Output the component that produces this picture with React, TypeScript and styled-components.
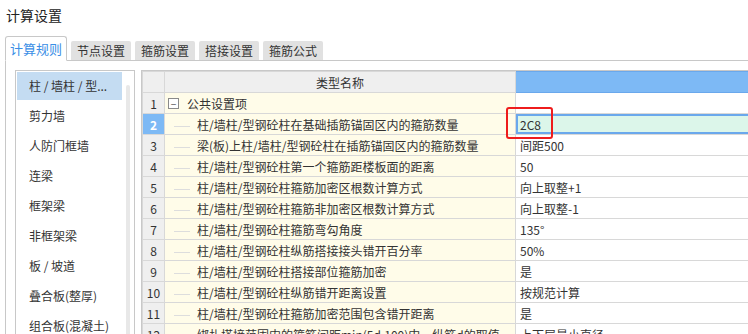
import styled, { createGlobalStyle, css } from "styled-components";

const GlobalStyle = createGlobalStyle`
  body {
    margin: 0;
    background: #ffffff;
    font-family: "Noto Sans CJK SC", "Noto Sans", sans-serif;
    font-size: 12px;
    color: #333333;
    overflow: hidden;
  }
`;

const tabs = ["计算规则", "节点设置", "箍筋设置", "搭接设置", "箍筋公式"];

const categories = [
  "柱 / 墙柱 / 型...",
  "剪力墙",
  "人防门框墙",
  "连梁",
  "框架梁",
  "非框架梁",
  "板 / 坡道",
  "叠合板(整厚)",
  "组合板(混凝土)",
];

const rows: { name: string; value: string }[] = [
  { name: "柱/墙柱/型钢砼柱在基础插筋锚固区内的箍筋数量", value: "2C8" },
  { name: "梁(板)上柱/墙柱/型钢砼柱在插筋锚固区内的箍筋数量", value: "间距500" },
  { name: "柱/墙柱/型钢砼柱第一个箍筋距楼板面的距离", value: "50" },
  { name: "柱/墙柱/型钢砼柱箍筋加密区根数计算方式", value: "向上取整+1" },
  { name: "柱/墙柱/型钢砼柱箍筋非加密区根数计算方式", value: "向上取整-1" },
  { name: "柱/墙柱/型钢砼柱箍筋弯勾角度", value: "135°" },
  { name: "柱/墙柱/型钢砼柱纵筋搭接接头错开百分率", value: "50%" },
  { name: "柱/墙柱/型钢砼柱搭接部位箍筋加密", value: "是" },
  { name: "柱/墙柱/型钢砼柱纵筋错开距离设置", value: "按规范计算" },
  { name: "柱/墙柱/型钢砼柱箍筋加密范围包含错开距离", value: "是" },
  { name: "绑扎搭接范围内的箍筋间距min(5d,100)中，纵筋d的取值", value: "上下层最小直径" },
];

const App = () => {
  return (
    <>
      <GlobalStyle />
      <Page>
        <Title>计算设置</Title>
        <TabBar>
          {tabs.map((t, i) => (
            <Tab key={t} $active={i === 0}>
              {t}
            </Tab>
          ))}
        </TabBar>
        <Panel>
          <ListBox>
            <ListItems>
              {categories.map((c, i) => (
                <ListItem key={c} $selected={i === 0}>
                  {c}
                </ListItem>
              ))}
            </ListItems>
            <ScrollTrack />
          </ListBox>
          <GridWrap>
            <Grid>
              <colgroup>
                <col style={{ width: 22 }} />
                <col style={{ width: 351 }} />
                <col />
              </colgroup>
              <thead>
                <tr>
                  <HeadCell />
                  <HeadCell>类型名称</HeadCell>
                  <HeadCell $value />
                </tr>
              </thead>
              <tbody>
                <tr>
                  <NumCell>1</NumCell>
                  <NameCell>
                    <GroupLabel>
                      <Toggle>−</Toggle>
                      公共设置项
                    </GroupLabel>
                  </NameCell>
                  <ValueCell />
                </tr>
                {rows.map((r, i) => (
                  <tr key={i}>
                    <NumCell $active={i === 0}>{i + 2}</NumCell>
                    <NameCell>
                      <TreeLine />
                      {r.name}
                    </NameCell>
                    <ValueCell $editing={i === 0}>
                      {r.value}
                      {i === 0 && <Highlight />}
                    </ValueCell>
                  </tr>
                ))}
              </tbody>
            </Grid>
          </GridWrap>
        </Panel>
      </Page>
    </>
  );
};

const Page = styled.div`
  width: 748px;
  height: 334px;
  overflow: hidden;
`;

const Title = styled.div`
  font-size: 14px;
  line-height: 20px;
  padding: 5px 0 0 6px;
  height: 32px;
  box-sizing: border-box;
  color: #222222;
`;

const TabBar = styled.div`
  display: flex;
  align-items: flex-end;
  gap: 4px;
  padding-left: 5px;
  height: 29px;
  margin-bottom: -1px;
  position: relative;
  z-index: 1;
`;

const Tab = styled.div<{ $active?: boolean }>`
  box-sizing: border-box;
  width: 60px;
  height: 19px;
  line-height: 19px;
  text-align: center;
  font-size: 12px;
  background: #e1e1e1;
  color: #333333;
  border-radius: 2px 2px 0 0;
  margin-bottom: 1px;

  ${(p) =>
    p.$active &&
    css`
      height: 25px;
      line-height: 24px;
      margin-bottom: 0;
      background: #ffffff;
      color: #3a8ee6;
      font-size: 13px;
      border: 1px solid #c8c8c8;
      border-bottom-color: #ffffff;
      border-radius: 3px 3px 0 0;
      width: 62px;
    `}
`;

const Panel = styled.div`
  display: flex;
  gap: 6px;
  margin-left: 5px;
  border-top: 1px solid #c8c8c8;
  border-left: 1px solid #c8c8c8;
  padding: 9px 0 0 9px;
  height: 300px;
`;

const ListBox = styled.div`
  display: flex;
  width: 120px;
  flex-shrink: 0;
  box-sizing: border-box;
  border: 1px solid #c8c8c8;
  border-bottom: none;
  padding: 1px 4px 0 1px;
  gap: 4px;
`;

const ListItems = styled.div`
  display: flex;
  flex-direction: column;
  gap: 2px;
  width: 105px;
`;

const ListItem = styled.div<{ $selected?: boolean }>`
  height: 28px;
  line-height: 28px;
  padding-left: 12px;
  white-space: nowrap;
  color: #333333;
  background: ${(p) => (p.$selected ? "#c4dcf2" : "transparent")};
`;

const ScrollTrack = styled.div`
  width: 4px;
  margin-top: 13px;
  background: #e8e8e8;
  border-radius: 2px;
`;

const GridWrap = styled.div`
  flex: 1;
  overflow: hidden;
  border-left: 1px solid #c8c8c8;
  border-top: 1px solid #c8c8c8;
`;

const Grid = styled.table`
  border-collapse: collapse;
  table-layout: fixed;
  width: 620px;
  font-size: 12px;

  td,
  th {
    height: 20px;
    padding: 0;
    border: 1px solid #d8d8d8;
    white-space: nowrap;
    overflow: hidden;
  }
`;

const HeadCell = styled.th<{ $value?: boolean }>`
  background: ${(p) => (p.$value ? "#7db9f5" : "#efefef")};
  font-weight: normal;
  color: #333333;
  text-align: center;
  ${(p) =>
    p.$value &&
    css`
      border-color: #6aa8ec !important;
    `}
`;

const NumCell = styled.td<{ $active?: boolean }>`
  text-align: center;
  background: ${(p) => (p.$active ? "#7db9f5" : "#efefef")};
  color: ${(p) => (p.$active ? "#ffffff" : "#333333")};
  font-weight: ${(p) => (p.$active ? "bold" : "normal")};
  border-color: #d0d0d0;
`;

const NameCell = styled.td`
  background: #fffce9;
  padding-left: 9px !important;
  position: relative;
`;

const GroupLabel = styled.span`
  display: inline-flex;
  align-items: center;
  gap: 8px;
  margin-left: -6px;
`;

const Toggle = styled.span`
  display: inline-flex;
  align-items: center;
  justify-content: center;
  width: 9px;
  height: 9px;
  border: 1px solid #8a8a8a;
  font-size: 10px;
  line-height: 9px;
  color: #555555;
  background: #ffffff;
`;

const TreeLine = styled.span`
  display: inline-block;
  width: 16px;
  height: 1px;
  background: #dddddd;
  vertical-align: middle;
  margin-right: 7px;
`;

const ValueCell = styled.td<{ $editing?: boolean }>`
  background: #ffffff;
  padding-left: 4px !important;
  position: relative;
  overflow: visible !important;

  ${(p) =>
    p.$editing &&
    css`
      background: #dcf6ea;
      box-shadow: inset 0 0 0 2px #6aa8ec;
    `}
`;

const Highlight = styled.span`
  position: absolute;
  z-index: 2;
  left: -10px;
  top: -7px;
  width: 43px;
  height: 28px;
  border: 2px solid #ee1c1c;
  border-radius: 3px;
  pointer-events: none;
`;

export default App;
